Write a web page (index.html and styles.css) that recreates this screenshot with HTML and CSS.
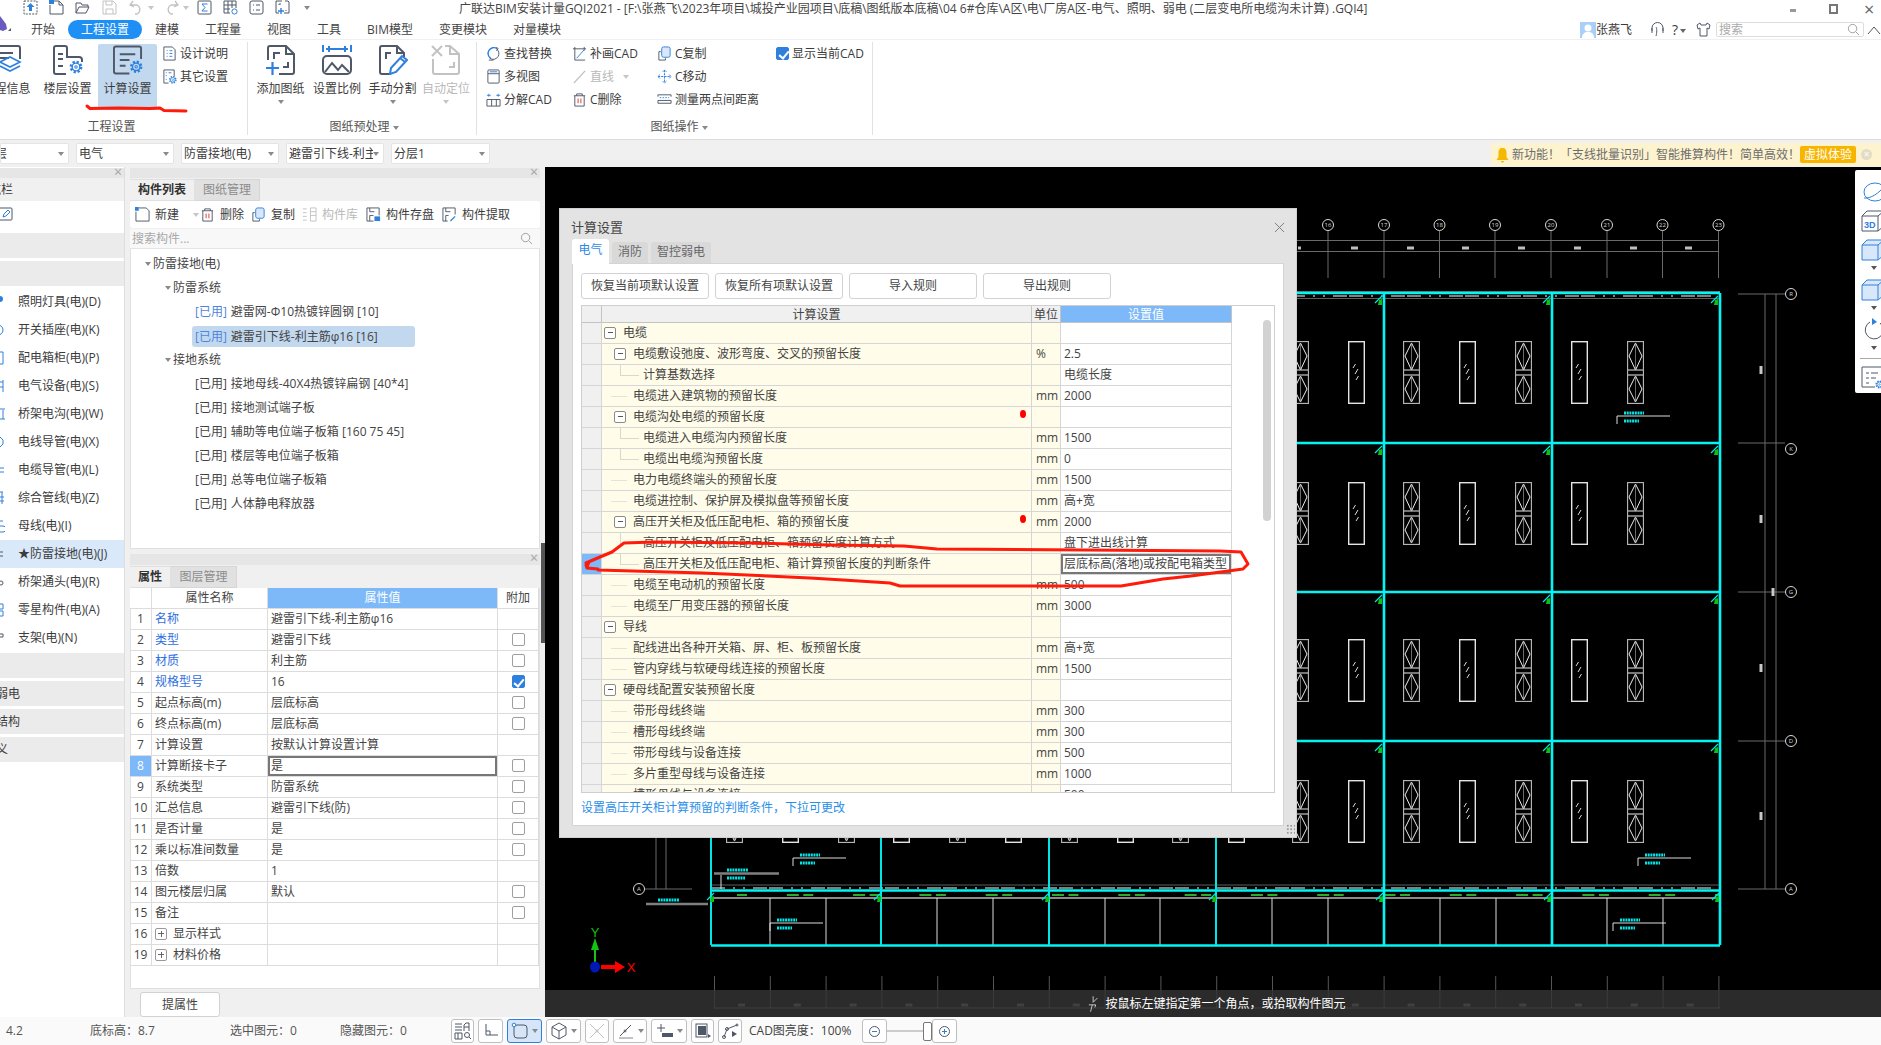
FILE: index.html
```html
<!DOCTYPE html>
<html lang="zh-CN">
<head>
<meta charset="utf-8">
<title>广联达BIM安装计量GQI2021</title>
<link rel="stylesheet" href="styles.css">
</head>
<body>
<svg class="defs" width="0" height="0" aria-hidden="true">
  <defs>
    <symbol id="gear" viewBox="0 0 16 16">
      <circle class="sb" cx="8" cy="8" r="6" stroke-width="2.6" stroke-dasharray="2.6 2.1"/>
      <circle class="sb" cx="8" cy="8" r="4.4" stroke-width="1.6"/>
      <circle class="sb" cx="8" cy="8" r="1.4" stroke-width="1.2"/>
    </symbol>
    <symbol id="i-info" viewBox="0 0 30 30">
      <path class="sd" stroke-width="2" d="M28 14V3a2 2 0 0 0-2-2H4a2 2 0 0 0-2 2v24M7 8h14M7 13h10"/>
      <path class="sb" stroke-width="1.6" d="M18 12l10 5-10 5-10-5zM8 21l10 5 10-5"/>
    </symbol>
    <symbol id="i-floor" viewBox="0 0 30 30">
      <path class="sd" stroke-width="2" d="M13 29H3a2 2 0 0 1-2-2V3a2 2 0 0 1 2-2h9a2 2 0 0 1 2 2v9h12a3 3 0 0 1 3 3v2M5 9h5M5 14h5M5 21h5"/>
      <use href="#gear" x="16" y="15" width="14" height="14"/>
    </symbol>
    <symbol id="i-calc" viewBox="0 0 31 30">
      <path class="sd" stroke-width="2" d="M17 29H3a2 2 0 0 1-2-2V3a2 2 0 0 1 2-2h24a2 2 0 0 1 2 2v11M7 9h16M7 15h10M7 21h6"/>
      <use href="#gear" x="17" y="15" width="14" height="14"/>
    </symbol>
    <symbol id="i-add" viewBox="0 0 30 30">
      <path class="sd" stroke-width="2" d="M13 29h13a2 2 0 0 0 2-2V9l-8-8H4a2 2 0 0 0-2 2v12M20 1v8h8M8 14V8h6M17 22h5v-5"/>
      <path class="sb" stroke-width="2.2" d="M0 23h13M6.500 17v13"/>
    </symbol>
    <symbol id="i-scale" viewBox="0 0 30 30">
      <path class="sb" stroke-width="2" d="M1 0v7M29 0v7M4 4h22M7 1v6M23 1v6"/>
      <rect class="sd" stroke-width="2" x="1" y="11" width="28" height="18" rx="4"/>
      <path class="sd" stroke-width="2" d="M3 27l7-9 6 7 4-5 7 7"/>
    </symbol>
    <symbol id="i-cut" viewBox="0 0 30 30">
      <path class="sd" stroke-width="2" d="M13 29H4a2 2 0 0 1-2-2V3a2 2 0 0 1 2-2h15l7 7v5M19 1v7h7M8 14V8h5"/>
      <path class="sb" stroke-width="2" d="M12 29l1-6 11-12 5 4-11 12zM22 13l5 4"/>
    </symbol>
    <symbol id="i-auto" viewBox="0 0 30 30">
      <path class="sg" stroke-width="2" d="M14 1h5l9 8v18a2 2 0 0 1-2 2H4a2 2 0 0 1-2-2V14M19 1v8h9M1 1l10 10M11 1L1 11M18 22h5v-5"/>
    </symbol>
    <symbol id="q-up" viewBox="0 0 15 15"><rect class="sd" x="1" y="1" width="13" height="13" stroke-dasharray="2 1.2"/><path class="fb" d="M7.500 3l4 4H9v4H6V7H3.500z"/></symbol>
    <symbol id="q-new" viewBox="0 0 15 15"><path class="sd" d="M5 1h5l4 4v9H1V5"/><path class="sd" d="M10 1v4h4"/><rect class="fb" x="0" y="0" width="5" height="4"/></symbol>
    <symbol id="q-open" viewBox="0 0 15 15"><path class="sd" d="M1 13V3h5l1 2h6v2M1 13l3-6h10l-3 6z"/></symbol>
    <symbol id="q-save" viewBox="0 0 15 15"><path class="sg" d="M1 1h10l3 3v10H1zM4 1v4h6V1M4 14V9h7v5"/></symbol>
    <symbol id="q-undo" viewBox="0 0 15 15"><path class="sg" stroke-width="1.3" d="M4 1L1 5l4 2M2 5h6a5 5 0 0 1 0 9H6"/></symbol>
    <symbol id="q-redo" viewBox="0 0 15 15"><path class="sg" stroke-width="1.3" d="M11 1l3 4-4 2M13 5H7a5 5 0 0 0 0 9h2"/></symbol>
    <symbol id="q-sum" viewBox="0 0 15 15"><rect class="sd" x="1" y="1" width="13" height="13" rx="1"/><path class="sb" d="M10.500 4H5l3 3.500L5 11h5.500"/></symbol>
    <symbol id="q-grid" viewBox="0 0 15 15"><path class="sd" d="M1 1h12v7M1 1v12h6M5 1v12M9 1v7M1 5h12M1 9h6"/><circle class="sb" cx="11.500" cy="11.500" r="2.600"/></symbol>
    <symbol id="q-list" viewBox="0 0 15 15"><rect class="sd" x="1" y="1" width="13" height="13" rx="2"/><path class="sd" d="M4 5h1M7 5h4M4 10h1M7 10h4"/></symbol>
    <symbol id="q-corner" viewBox="0 0 15 15"><path class="sd" d="M7 1H1v12h3M10 1h3l1 1v11H9M4 5V4h2M11 10v1"/><path class="sb" stroke-width="1.4" d="M3 11h6M6 8v6"/></symbol>
    <symbol id="s-doc" viewBox="0 0 16 16"><path class="sd" d="M2 1h9l3 3v11H2z"/><path class="sb" d="M5 5h1M8 5h3M5 8h1M8 8h3M5 11h1M8 11h3"/></symbol>
    <symbol id="s-oth" viewBox="0 0 16 16"><path class="sd" d="M7 15H2V1h11v7"/><path class="sb" d="M4 4h1M7 4h3M4 7h1M4 11h1"/><use href="#gear" x="7" y="7" width="9" height="9"/></symbol>
    <symbol id="s-find" viewBox="0 0 16 16"><path class="sb" stroke-width="1.5" d="M12 3a6 6 0 0 0-9 2 6 6 0 0 0 2 8"/><path class="sd" d="M4 13a6 6 0 0 0 9-2 6 6 0 0 0-2-8M3 15h5M11 1l2 2-2 2"/></symbol>
    <symbol id="s-view" viewBox="0 0 16 16"><rect class="sd" x="2" y="1" width="12" height="14" rx="1"/><path class="sd" d="M2 5h12"/><path class="sb" d="M4 3h8"/></symbol>
    <symbol id="s-split" viewBox="0 0 16 16"><path class="sd" d="M1 8v7h14V8zM6 8v7M11 8v7"/><path class="sb" d="M3 5V2M13 5V2M1 3.500h4M11 3.500h4"/></symbol>
    <symbol id="s-patch" viewBox="0 0 16 16"><path class="sd" d="M1 3h14M3 1v4M13 1v4M3 15h11M3 5v10"/><path class="sb" d="M5 13l8-9"/></symbol>
    <symbol id="s-line" viewBox="0 0 16 16"><path class="sg" stroke-width="1.4" d="M2 15L14 2"/></symbol>
    <symbol id="s-del" viewBox="0 0 16 16"><path class="sd" d="M2 4h12M5 4V2h6v2M3 4v11h10V4"/><path class="sr" d="M6.500 7v5M9.500 7v5"/></symbol>
    <symbol id="s-copy" viewBox="0 0 16 16"><path class="sd" d="M4 6H2v9h7v-2"/><rect class="sb fl" x="5" y="1" width="9" height="11" rx="2"/></symbol>
    <symbol id="s-move" viewBox="0 0 16 16"><path class="sb" d="M8 1v14M1 8h14M6 3l2-2 2 2M6 13l2 2 2-2M3 6L1 8l2 2M13 6l2 2-2 2" stroke-dasharray="2.4 1"/></symbol>
    <symbol id="s-meas" viewBox="0 0 16 16"><path class="sd" d="M1 3h14M1 3v2M15 3v2M1 12h14v-3H1z"/><path class="sb" d="M3 6h10" stroke-dasharray="1.500 1.500"/></symbol>
    <symbol id="t-new" viewBox="0 0 16 16"><path class="sd" d="M4 1h8l3 3v11H1V5"/><rect class="fb" x="0" y="0" width="4" height="4"/></symbol>
    <symbol id="t-lib" viewBox="0 0 16 16"><path class="sg" d="M1 2h4M1 6h4M1 10h4M1 14h4M9 1h6v14H9zM9 5h6M9 9h6"/></symbol>
    <symbol id="t-save" viewBox="0 0 16 16"><path class="sd" d="M8 15H1V1h13v8M4 15V9h4M4 1v4h5"/><rect class="fb" x="9" y="10" width="6" height="5"/></symbol>
    <symbol id="t-get" viewBox="0 0 16 16"><path class="sd" d="M6 15H1V1h13v7M4 15V9h3M4 1v4h5"/><path class="sb" stroke-width="1.4" d="M9 15l5-5"/></symbol>
    <symbol id="t-search" viewBox="0 0 14 14"><circle class="sn" cx="6" cy="6" r="4.500"/><path class="sn" d="M9.500 9.500L13 13"/></symbol>
    <symbol id="win-d" viewBox="0 0 17 63">
      <rect class="wg" x="0.500" y="0.500" width="16" height="62"/>
      <path class="wg" d="M1 29h15"/><path class="ww" d="M1 34h15M8.500 2L15 15 8.500 29 2 15zM8.500 35L15 48 8.500 61 2 48z"/>
      <path class="wg wthin" d="M8.500 2v27M8.500 35v26"/>
    </symbol>
    <symbol id="win-r" viewBox="0 0 17 63">
      <rect class="wb" x="0.700" y="0.700" width="15.600" height="61.600"/>
      <path class="wl" d="M5 27l2.500-4M7 33l3-5M8 39l2.500-4"/>
    </symbol>
    <g id="win-row">
      <use href="#win-d" x="726" width="17" height="63"/><use href="#win-r" x="782" width="17" height="63"/>
      <use href="#win-d" x="838" width="17" height="63"/><use href="#win-r" x="893" width="17" height="63"/>
      <use href="#win-d" x="949" width="17" height="63"/><use href="#win-r" x="1005" width="17" height="63"/>
      <use href="#win-d" x="1061" width="17" height="63"/><use href="#win-r" x="1117" width="17" height="63"/>
      <use href="#win-d" x="1172" width="17" height="63"/><use href="#win-r" x="1228" width="17" height="63"/>
      <use href="#win-d" x="1292" width="17" height="63"/><use href="#win-r" x="1348" width="17" height="63"/>
      <use href="#win-d" x="1403" width="17" height="63"/><use href="#win-r" x="1459" width="17" height="63"/>
      <use href="#win-d" x="1515" width="17" height="63"/><use href="#win-r" x="1571" width="17" height="63"/>
      <use href="#win-d" x="1627" width="17" height="63"/>
    </g>
    <g id="cnr"><path class="cy-t" d="M-8 9l7-7"/><path class="gr-f" d="M-4 6l3-1v6h-4z"/></g>
    <g id="tag"><path class="cy-b" d="M0 0h20M0 8h15"/><path class="wl" d="M-7 3h53M-7 3v8"/></g>
  </defs>
</svg>

<header class="titlebar">
  <div class="quick">
    <span class="qa w26"><svg class="q"><use href="#q-up"/></svg></span>
    <span class="qa w26"><svg class="q"><use href="#q-new"/></svg></span>
    <span class="qa w27"><svg class="q"><use href="#q-open"/></svg></span>
    <span class="qa w27"><svg class="q"><use href="#q-save"/></svg></span>
    <span class="qa w35"><svg class="q"><use href="#q-undo"/></svg><i class="caret c-light"></i></span>
    <span class="qa w33"><svg class="q"><use href="#q-redo"/></svg><i class="caret c-light"></i></span>
    <span class="qa w26"><svg class="q"><use href="#q-sum"/></svg></span>
    <span class="qa w26"><svg class="q"><use href="#q-grid"/></svg></span>
    <span class="qa w26"><svg class="q"><use href="#q-list"/></svg></span>
    <span class="qa w29"><svg class="q"><use href="#q-corner"/></svg></span>
    <i class="caret"></i>
  </div>
  <div class="title">广联达BIM安装计量GQI2021 - [F:\张燕飞\2023年项目\城投产业园项目\底稿\图纸版本底稿\04 6#仓库\A区\电\厂房A区-电气、照明、弱电 (二层变电所电缆沟未计算) .GQI4]</div>
  <div class="winctl">
    <span class="w-min"></span>
    <span class="w-res"></span>
    <span class="w-x">×</span>
  </div>
</header>

<nav class="tabs">
  <svg class="logo" viewBox="0 0 12 20"><path class="lg" d="M0 0l6 8 1 5-4 2-3-1z"/><path class="fd" d="M8 15l3-3v3z"/></svg>
  <span class="tab">开始</span>
  <span class="tab tab-on">工程设置</span>
  <span class="tab">建模</span>
  <span class="tab">工程量</span>
  <span class="tab">视图</span>
  <span class="tab">工具</span>
  <span class="tab">BIM模型</span>
  <span class="tab">变更模块</span>
  <span class="tab">对量模块</span>
  <div class="user">
    <svg class="avatar" viewBox="0 0 16 16"><rect width="16" height="16" fill="#a9d0f8"/><circle cx="8" cy="6" r="3.500" fill="#fff"/><path d="M2 16c0-5 3-6 6-6s6 1 6 6z" fill="#fff"/></svg>
    <span class="uname">张燕飞</span>
    <svg class="u-ic" viewBox="0 0 15 15"><path class="sd" d="M2 9V6a5.500 5.500 0 0 1 11 0v3M2 6v5M13 6v5M6 14c1-3 1-8 0-9"/></svg>
    <span class="help">?<i class="caret"></i></span>
    <svg class="u-ic" viewBox="0 0 15 15"><path class="sd" d="M4 1L1 3l1 4 2-1v8h7V6l2 1 1-4-3-2-1 2H5z"/></svg>
    <div class="search-top"><span>搜索</span><svg class="s14"><use href="#t-search"/></svg></div>
    <svg class="u-up" viewBox="0 0 14 10"><path class="sd" d="M1 9l6-7 6 7"/></svg>
  </div>
</nav>

<section class="ribbon">
  <div class="rg rg1">
    <div class="rg-body">
      <div class="big w61"><svg class="bi"><use href="#i-info"/></svg><span>工程信息</span></div>
      <div class="big w61"><svg class="bi"><use href="#i-floor"/></svg><span>楼层设置</span></div>
      <div class="big w59 big-on"><svg class="bi"><use href="#i-calc"/></svg><span>计算设置</span></div>
      <div class="rs-col">
        <div class="rs"><svg class="si"><use href="#s-doc"/></svg>设计说明</div>
        <div class="rs"><svg class="si"><use href="#s-oth"/></svg>其它设置</div>
      </div>
    </div>
    <div class="rg-label">工程设置</div>
  </div>
  <div class="rg rg2">
    <div class="rg-body">
      <div class="big w57"><svg class="bi"><use href="#i-add"/></svg><span>添加图纸</span><i class="caret"></i></div>
      <div class="big w56"><svg class="bi"><use href="#i-scale"/></svg><span>设置比例</span></div>
      <div class="big w55"><svg class="bi"><use href="#i-cut"/></svg><span>手动分割</span><i class="caret"></i></div>
      <div class="big w52 off"><svg class="bi"><use href="#i-auto"/></svg><span>自动定位</span><i class="caret c-light"></i></div>
    </div>
    <div class="rg-label">图纸预处理 <i class="caret"></i></div>
  </div>
  <div class="rg rg3">
    <div class="rg-body rg-grid">
      <div class="rs"><svg class="si"><use href="#s-find"/></svg>查找替换</div>
      <div class="rs"><svg class="si"><use href="#s-patch"/></svg>补画CAD</div>
      <div class="rs"><svg class="si"><use href="#s-copy"/></svg>C复制</div>
      <label class="rs rs-chk"><span class="cb cb-on"></span>显示当前CAD</label>
      <div class="rs"><svg class="si"><use href="#s-view"/></svg>多视图</div>
      <div class="rs off"><svg class="si"><use href="#s-line"/></svg>直线<i class="caret c-light ml"></i></div>
      <div class="rs"><svg class="si"><use href="#s-move"/></svg>C移动</div>
      <div></div>
      <div class="rs"><svg class="si"><use href="#s-split"/></svg>分解CAD</div>
      <div class="rs"><svg class="si"><use href="#s-del"/></svg>C删除</div>
      <div class="rs"><svg class="si"><use href="#s-meas"/></svg>测量两点间距离</div>
    </div>
    <div class="rg-label">图纸操作 <i class="caret"></i></div>
  </div>
</section>

<section class="selbar">
  <div class="sel sel0"><span class="sel-t0">首层</span><i class="caret"></i></div>
  <div class="sel sel98"><span>电气</span><i class="caret"></i></div>
  <div class="sel sel98"><span>防雷接地(电)</span><i class="caret"></i></div>
  <div class="sel sel98"><span>避雷引下线-利主</span><i class="caret"></i></div>
  <div class="sel sel99"><span>分层1</span><i class="caret"></i></div>
  <div class="banner">
    <svg class="bell" viewBox="0 0 12 16"><path d="M6 1c3 0 4 2 4 5v4l2 3H0l2-3V6c0-3 1-5 4-5zM4 14h4l-2 2z"/></svg>
    <span class="b-text">新功能！「支线批量识别」智能推算构件！简单高效！</span>
    <span class="b-btn">虚拟体验</span>
    <span class="b-x">×</span>
  </div>
</section>

<main class="main">
  <aside class="nav">
    <div class="ph"><span class="ph-x">×</span></div>
    <div class="nav-title"><span>导航栏</span></div>
    <div class="nav-edit"><svg class="nav-pen" viewBox="0 0 14 14"><rect class="sd" x="0" y="1" width="13" height="12" rx="1"/><path class="sb" d="M4 10l1-3 4-4 2 2-4 4z"/></svg></div>
    <div class="ng ng-first"></div>
    <div class="ng ng-gap"></div>
    <ul class="nl">
      <li><svg class="ni" viewBox="0 0 5 14"><circle class="fb" cx="0" cy="4" r="3"/></svg>照明灯具(电)(D)</li>
      <li><svg class="ni" viewBox="0 0 5 14"><circle class="sb" cx="-2" cy="7" r="5"/></svg>开关插座(电)(K)</li>
      <li><svg class="ni" viewBox="0 0 5 14"><path class="sb" d="M0 1h3v12H0"/></svg>配电箱柜(电)(P)</li>
      <li><svg class="ni" viewBox="0 0 5 14"><path class="sb" d="M0 3h3M3 1v12M0 8h3"/></svg>电气设备(电)(S)</li>
      <li><svg class="ni" viewBox="0 0 5 14"><path class="sb" d="M0 2h5M3 3v9M0 12h5"/></svg>桥架电沟(电)(W)</li>
      <li><svg class="ni" viewBox="0 0 5 14"><path class="sb" d="M0 2l3 3v4l-3 3"/></svg>电线导管(电)(X)</li>
      <li><svg class="ni" viewBox="0 0 5 14"><path class="sb" d="M0 5h4M0 9h4"/></svg>电缆导管(电)(L)</li>
      <li><svg class="ni" viewBox="0 0 5 14"><path class="sb" d="M0 1h3M2 1v12M0 6h4M0 10h4"/></svg>综合管线(电)(Z)</li>
      <li><svg class="ni" viewBox="0 0 5 14"><path class="sb" d="M0 2h3M0 7h3a3 3 0 0 1 0 6H0"/></svg>母线(电)(I)</li>
      <li class="nl-on"><svg class="ni" viewBox="0 0 5 14"><path class="sd" d="M0 5h3M0 9h3"/></svg>★防雷接地(电)(J)</li>
      <li><svg class="ni" viewBox="0 0 5 14"><circle class="sd" cx="1" cy="8" r="2"/></svg>桥架通头(电)(R)</li>
      <li><svg class="ni" viewBox="0 0 5 14"><path class="sb" d="M0 1h3v5H0M0 8h3v5H0"/></svg>零星构件(电)(A)</li>
      <li><svg class="ni" viewBox="0 0 5 14"><path class="sd" d="M0 3h3v3H0"/></svg>支架(电)(N)</li>
    </ul>
    <div class="ng"></div>
    <div class="ng ng-m3"><span class="ng-t">弱电</span></div>
    <div class="ng ng-m3"><span class="ng-t">结构</span></div>
    <div class="ng ng-m3"><span class="ng-t ng-t3">自定义</span></div>
  </aside>

  <div class="mid">
    <div class="ph ph-m"><span class="ph-x">×</span></div>
    <div class="ptabs"><span class="pt pt65 pt-on">构件列表</span><span class="pt pt65">图纸管理</span></div>
    <div class="tools">
      <span class="tl tl-new"><svg class="si"><use href="#t-new"/></svg>新建<i class="caret c-light ml9"></i></span>
      <span class="tl tl-del"><svg class="si"><use href="#s-del"/></svg>删除</span>
      <span class="tl tl-cp"><svg class="si"><use href="#s-copy"/></svg>复制</span>
      <span class="tl tl-lib off"><svg class="si"><use href="#t-lib"/></svg>构件库</span>
      <span class="tl tl-sv"><svg class="si"><use href="#t-save"/></svg>构件存盘</span>
      <span class="tl"><svg class="si"><use href="#t-get"/></svg>构件提取</span>
    </div>
    <div class="csearch"><span>搜索构件...</span><svg class="s14"><use href="#t-search"/></svg></div>
    <div class="tree">
      <div class="tr t1"><i class="caret"></i>防雷接地(电)</div>
      <div class="tr t2"><i class="caret"></i>防雷系统</div>
      <div class="tr t3"><span class="tag tag-b">[已用]</span>避雷网-Φ10热镀锌圆钢 [10]</div>
      <div class="tr t3"><span class="tr-sel"><span class="tag tag-b">[已用]</span>避雷引下线-利主筋φ16 [16]</span></div>
      <div class="tr t2"><i class="caret"></i>接地系统</div>
      <div class="tr t3"><span class="tag">[已用]</span>接地母线-40X4热镀锌扁钢 [40*4]</div>
      <div class="tr t3"><span class="tag">[已用]</span>接地测试端子板</div>
      <div class="tr t3"><span class="tag">[已用]</span>辅助等电位端子板箱 [160 75 45]</div>
      <div class="tr t3"><span class="tag">[已用]</span>楼层等电位端子板箱</div>
      <div class="tr t3"><span class="tag">[已用]</span>总等电位端子板箱</div>
      <div class="tr t3"><span class="tag">[已用]</span>人体静电释放器</div>
    </div>
    <div class="ph ph-m ph-2"><span class="ph-x">×</span></div>
    <div class="ptabs"><span class="pt pt41 pt-on">属性</span><span class="pt pt66">图层管理</span></div>
    <div class="props">
      <table class="pg">
        <colgroup><col class="c22"><col class="c116"><col class="c230"><col class="c41"></colgroup>
        <thead><tr><th></th><th>属性名称</th><th class="th-b">属性值</th><th>附加</th></tr></thead>
        <tbody>
          <tr><td class="n">1</td><td class="lk">名称</td><td>避雷引下线-利主筋φ16</td><td></td></tr>
          <tr><td class="n">2</td><td class="lk">类型</td><td>避雷引下线</td><td class="m"><span class="cb"></span></td></tr>
          <tr><td class="n">3</td><td class="lk">材质</td><td>利主筋</td><td class="m"><span class="cb"></span></td></tr>
          <tr><td class="n">4</td><td class="lk">规格型号</td><td>16</td><td class="m"><span class="cb cb-on"></span></td></tr>
          <tr><td class="n">5</td><td>起点标高(m)</td><td>层底标高</td><td class="m"><span class="cb"></span></td></tr>
          <tr><td class="n">6</td><td>终点标高(m)</td><td>层底标高</td><td class="m"><span class="cb"></span></td></tr>
          <tr><td class="n">7</td><td>计算设置</td><td>按默认计算设置计算</td><td></td></tr>
          <tr><td class="n n-on">8</td><td>计算断接卡子</td><td class="cell-on">是</td><td class="m"><span class="cb"></span></td></tr>
          <tr><td class="n">9</td><td>系统类型</td><td>防雷系统</td><td class="m"><span class="cb"></span></td></tr>
          <tr><td class="n">10</td><td>汇总信息</td><td>避雷引下线(防)</td><td class="m"><span class="cb"></span></td></tr>
          <tr><td class="n">11</td><td>是否计量</td><td>是</td><td class="m"><span class="cb"></span></td></tr>
          <tr><td class="n">12</td><td>乘以标准间数量</td><td>是</td><td class="m"><span class="cb"></span></td></tr>
          <tr><td class="n">13</td><td>倍数</td><td>1</td><td></td></tr>
          <tr><td class="n">14</td><td>图元楼层归属</td><td>默认</td><td class="m"><span class="cb"></span></td></tr>
          <tr><td class="n">15</td><td>备注</td><td></td><td class="m"><span class="cb"></span></td></tr>
          <tr><td class="n">16</td><td><span class="pl"></span>显示样式</td><td></td><td></td></tr>
          <tr><td class="n">19</td><td><span class="pl"></span>材料价格</td><td></td><td></td></tr>
        </tbody>
      </table>
    </div>
    <div class="pfoot"><button class="btn btn-p">提属性</button></div>
    <span class="split"></span>
  </div>

  <div class="canvas">
    <svg class="cad" viewBox="545 167 1336 850" width="1336" height="850">
      <path class="d1" d="M1297 240.500H1718.500M1297 251.500H1718.500M1328 231V278M1384 231V278M1439.500 231V278M1495 231V278M1551 231V278M1607 231V278M1662.500 231V278M1718.500 231V278"/>
      <path class="blob" d="M1298 248h3M1351 248h7M1407 248h7M1462 248h7M1518 248h7M1574 248h7M1630 248h7M1685 248h7"/>
      <g class="axc">
        <circle cx="1328" cy="225" r="5.500"/><circle cx="1384" cy="225" r="5.500"/><circle cx="1439.500" cy="225" r="5.500"/><circle cx="1495" cy="225" r="5.500"/><circle cx="1551" cy="225" r="5.500"/><circle cx="1607" cy="225" r="5.500"/><circle cx="1662.500" cy="225" r="5.500"/><circle cx="1718.500" cy="225" r="5.500"/>
        <circle cx="1791" cy="294" r="5.500"/><circle cx="1791" cy="449" r="5.500"/><circle cx="1791" cy="592" r="5.500"/><circle cx="1791" cy="741" r="5.500"/><circle cx="1791" cy="889" r="5.500"/><circle cx="639" cy="889" r="5.500"/>
      </g>
      <g class="axt">
        <text x="1328" y="227">16</text><text x="1384" y="227">17</text><text x="1439.500" y="227">18</text><text x="1495" y="227">19</text><text x="1551" y="227">20</text><text x="1607" y="227">21</text><text x="1662.500" y="227">22</text><text x="1718.500" y="227">23</text>
        <text x="1791" y="296">R</text><text x="1791" y="451">K</text><text x="1791" y="594">G</text><text x="1791" y="743">D</text><text x="1791" y="891">A</text><text x="639" y="891">A</text>
      </g>
      <path class="d1" d="M1738 294H1785M1738 443H1785M1738 592H1785M1738 741H1785M1738 889H1785M1765 294V889M1776 294V889M645 889H692M656 830V889M666 830V889"/>
      <path class="blob-v" d="M1761 366v8M1761 515v8M1761 664v8M1761 812v8M1773 588v8"/>
      <use href="#win-row" y="341"/><use href="#win-row" y="482"/><use href="#win-row" y="639"/><use href="#win-row" y="780"/>
      <path class="d2" d="M711 291.500H1720M711 298.500H1720M711 885H1720"/>
      <path class="band" d="M711 296H1720"/>
      <path class="band" d="M711 888H1720"/>
      <path class="white" d="M711 898H1720"/>
      <path class="greend" d="M737 895H1720"/>
      <path class="wl" d="M770 898V945M826 898V945M937 898V945M993 898V945M1105 898V945M1160 898V945M1272 898V945M1328 898V945M1440 898V945M1496 898V945M1607 898V945M1663 898V945"/>
      <path class="cy" d="M711 293H1720M711 443H1720M711 592H1720M711 741H1720M711 890.500H1720M711 945.500H1720M1384 293V945M1552 293V945M1720 293V945"/>
      <path class="cy-thin" d="M711 293V945M881 293V945M1049 293V945M1216 293V945"/>
      <g>
        <use href="#cnr" x="1383" y="294"/><use href="#cnr" x="1551" y="294"/><use href="#cnr" x="1719" y="294"/>
        <use href="#cnr" x="1383" y="444"/><use href="#cnr" x="1551" y="444"/><use href="#cnr" x="1719" y="444"/>
        <use href="#cnr" x="1383" y="593"/><use href="#cnr" x="1551" y="593"/><use href="#cnr" x="1719" y="593"/>
        <use href="#cnr" x="1383" y="742"/><use href="#cnr" x="1551" y="742"/><use href="#cnr" x="1719" y="742"/>
        <use href="#cnr" x="715" y="891"/><use href="#cnr" x="882" y="891"/><use href="#cnr" x="1050" y="891"/><use href="#cnr" x="1217" y="891"/><use href="#cnr" x="1384" y="891"/><use href="#cnr" x="1552" y="891"/><use href="#cnr" x="1720" y="891"/>
      </g>
      <use href="#tag" x="1624" y="413"/><use href="#tag" x="1645" y="855"/><use href="#tag" x="800" y="855"/>
      <use href="#tag" x="777" y="920"/><use href="#tag" x="1620" y="920"/>
      <path class="thick" d="M714 873.500H779M646 904H708"/><path class="wl" d="M721 875V889"/>
      <path class="cy-b" d="M727 870h21M727 878h18M658 900h21"/>
      <path class="comb" d="M714 992H1720"/>
      <path class="d3" d="M714 1008H1720"/>
      <path class="dimt" d="M738 1005H1720"/>
      <path class="gz-g" d="M595 967V945"/><path class="gz-gf" d="M595 938l4 12h-8z"/>
      <path class="gz-r" d="M601 967H616"/><path class="gz-rf" d="M625 967l-10 6v-12z"/>
      <ellipse class="gz-b" cx="595" cy="967" rx="5" ry="5.500"/>
      <text class="gz-ty" x="595" y="937">Y</text><text class="gz-tx" x="631" y="972">X</text>
    </svg>

    <div class="rtool">
      <svg class="rt" viewBox="0 0 26 24"><ellipse class="sb" cx="15" cy="12" rx="11" ry="9"/><path class="sb" d="M4 18c6 1 16-5 20-12"/></svg>
      <svg class="rt" viewBox="0 0 26 24"><path class="sd" d="M2 7h16v15H2zM2 7l5-5h17v15l-6 5M18 7l6-5"/><text class="rt-3d" x="4" y="19">3D</text></svg>
      <svg class="rt" viewBox="0 0 26 24"><path class="sb fl" d="M2 7h16v15H2zM2 7l5-5h17v15l-6 5M18 7l6-5"/></svg>
      <i class="caret rc"></i>
      <svg class="rt" viewBox="0 0 26 24"><path class="sb fl" d="M2 7h16v15H2zM2 7l5-5h17v15l-6 5M18 7l6-5"/></svg>
      <i class="caret rc"></i>
      <svg class="rt" viewBox="0 0 26 24"><path class="sd" d="M10 4a9 9 0 1 0 10 1"/><path class="fb" d="M12 0l5 4-5 3z"/></svg>
      <i class="caret rc"></i>
      <span class="rt-line"></span>
      <svg class="rt" viewBox="0 0 26 24"><path class="sd" d="M15 22H2V2h20v13M6 8h3M11 8h7M6 13h3M11 13h5M6 18h3"/><use href="#gear" x="15" y="15" width="9" height="9"/></svg>
    </div>

    <div class="hint">
      <svg class="hint-ic" viewBox="0 0 14 20"><path class="wl" d="M6 1v7l5-5M1 11h8M5 11l-2 8M9 11l-1 3"/></svg>
      <span>按鼠标左键指定第一个角点，或拾取构件图元</span>
    </div>

    <div class="dlg">
      <div class="dlg-h"><span>计算设置</span><svg class="dlg-x" viewBox="0 0 12 12"><path d="M1 1l10 10M11 1L1 11"/></svg></div>
      <div class="dlg-tabs"><span class="dt dt-on">电气</span><span class="dt">消防</span><span class="dt dt-w">智控弱电</span></div>
      <div class="dlg-b">
        <div class="dlg-btns">
          <button class="btn btn-d">恢复当前项默认设置</button>
          <button class="btn btn-d">恢复所有项默认设置</button>
          <button class="btn btn-d">导入规则</button>
          <button class="btn btn-d">导出规则</button>
        </div>
        <div class="cwrap">
          <table class="ct">
            <colgroup><col class="c20"><col class="c430"><col class="c29"><col class="c171"></colgroup>
            <thead><tr><th></th><th>计算设置</th><th>单位</th><th class="th-b">设置值</th></tr></thead>
            <tbody>
              <tr><td class="ind"></td><td class="nm l0"><i class="ex"></i>电缆</td><td class="u"></td><td class="v"></td></tr>
              <tr><td class="ind"></td><td class="nm l1 g"><i class="ex"></i>电缆敷设弛度、波形弯度、交叉的预留长度</td><td class="u">%</td><td class="v">2.5</td></tr>
              <tr><td class="ind"></td><td class="nm l2">计算基数选择</td><td class="u"></td><td class="v">电缆长度</td></tr>
              <tr><td class="ind"></td><td class="nm l1 h">电缆进入建筑物的预留长度</td><td class="u">mm</td><td class="v">2000</td></tr>
              <tr><td class="ind"></td><td class="nm l1 g"><i class="ex"></i>电缆沟处电缆的预留长度<b class="dot"></b></td><td class="u"></td><td class="v"></td></tr>
              <tr><td class="ind"></td><td class="nm l2">电缆进入电缆沟内预留长度</td><td class="u">mm</td><td class="v">1500</td></tr>
              <tr><td class="ind"></td><td class="nm l2">电缆出电缆沟预留长度</td><td class="u">mm</td><td class="v">0</td></tr>
              <tr><td class="ind"></td><td class="nm l1 h">电力电缆终端头的预留长度</td><td class="u">mm</td><td class="v">1500</td></tr>
              <tr><td class="ind"></td><td class="nm l1 h">电缆进控制、保护屏及模拟盘等预留长度</td><td class="u">mm</td><td class="v">高+宽</td></tr>
              <tr><td class="ind"></td><td class="nm l1 g"><i class="ex"></i>高压开关柜及低压配电柜、箱的预留长度<b class="dot"></b></td><td class="u">mm</td><td class="v">2000</td></tr>
              <tr><td class="ind"></td><td class="nm l2">高压开关柜及低压配电柜、箱预留长度计算方式</td><td class="u"></td><td class="v">盘下进出线计算</td></tr>
              <tr><td class="ind ind-on"></td><td class="nm l2">高压开关柜及低压配电柜、箱计算预留长度的判断条件</td><td class="u"></td><td class="v v-on">层底标高(落地)或按配电箱类型</td></tr>
              <tr><td class="ind"></td><td class="nm l1 h">电缆至电动机的预留长度</td><td class="u">mm</td><td class="v">500</td></tr>
              <tr><td class="ind"></td><td class="nm l1 h">电缆至厂用变压器的预留长度</td><td class="u">mm</td><td class="v">3000</td></tr>
              <tr><td class="ind"></td><td class="nm l0"><i class="ex"></i>导线</td><td class="u"></td><td class="v"></td></tr>
              <tr><td class="ind"></td><td class="nm l1 h">配线进出各种开关箱、屏、柜、板预留长度</td><td class="u">mm</td><td class="v">高+宽</td></tr>
              <tr><td class="ind"></td><td class="nm l1 h">管内穿线与软硬母线连接的预留长度</td><td class="u">mm</td><td class="v">1500</td></tr>
              <tr><td class="ind"></td><td class="nm l0"><i class="ex"></i>硬母线配置安装预留长度</td><td class="u"></td><td class="v"></td></tr>
              <tr><td class="ind"></td><td class="nm l1 h">带形母线终端</td><td class="u">mm</td><td class="v">300</td></tr>
              <tr><td class="ind"></td><td class="nm l1 h">槽形母线终端</td><td class="u">mm</td><td class="v">300</td></tr>
              <tr><td class="ind"></td><td class="nm l1 h">带形母线与设备连接</td><td class="u">mm</td><td class="v">500</td></tr>
              <tr><td class="ind"></td><td class="nm l1 h">多片重型母线与设备连接</td><td class="u">mm</td><td class="v">1000</td></tr>
              <tr><td class="ind"></td><td class="nm l1 h">槽形母线与设备连接</td><td class="u">mm</td><td class="v">500</td></tr>
            </tbody>
          </table>
          <span class="vbar"></span>
        </div>
        <div class="dlg-hint">设置高压开关柜计算预留的判断条件，下拉可更改</div>
      </div>
      <span class="grip"></span>
    </div>
  </div>
</main>

<footer class="status">
  <span class="st st84">4.2</span>
  <span class="st st140">底标高：8.7</span>
  <span class="st st110">选中图元：0</span>
  <span class="st st111">隐藏图元：0</span>
  <div class="sb-btns">
    <span class="sbtn sw23"><svg class="sic" viewBox="0 0 18 18"><path class="sd" d="M1 2h7M1 5h7M1 8h7M10 9V3l2-2h3v8M10 5h5M1 11h7v6H1zM4 11v6"/><circle class="sd" cx="13" cy="13" r="2.500"/><path class="sd" d="M15 15l2 2"/></svg></span>
    <span class="sbtn sw25"><svg class="sic" viewBox="0 0 18 18"><path class="sd" d="M4 2v11h12M4 9h4v4"/></svg></span>
    <span class="sbtn sw35 sbtn-on"><svg class="sic" viewBox="0 0 18 18"><rect class="sd" x="3" y="3" width="13" height="13" rx="3"/><circle class="sb fw" cx="3" cy="3" r="1.800"/></svg><i class="caret"></i></span>
    <span class="sbtn sw35"><svg class="sic" viewBox="0 0 18 18"><path class="sd" d="M9 1l7 4v8l-7 4-7-4V5zM2 5l7 4 7-4M9 9v8"/></svg><i class="caret"></i></span>
    <span class="sbtn sw24"><svg class="sic" viewBox="0 0 18 18"><path class="sg" d="M2 2l14 14M16 2L2 16"/><circle class="sg" cx="9" cy="9" r="1"/></svg></span>
    <span class="sbtn sw34"><svg class="sic" viewBox="0 0 18 18"><path class="sd" d="M3 14L14 3"/><path class="sg" stroke-width="2" d="M2 16h14"/><circle class="sd" cx="8" cy="9" r="1"/></svg><i class="caret"></i></span>
    <span class="sbtn sw36"><svg class="sic" viewBox="0 0 18 18"><path class="sd" d="M1 6h8M5 2v8"/><rect class="fd" x="6" y="11" width="11" height="4"/></svg><i class="caret"></i></span>
    <span class="sbtn sw23"><svg class="sic" viewBox="0 0 18 18"><rect class="sd" x="2" y="2" width="11" height="13"/><rect class="fd" x="4" y="4" width="8" height="9"/><path class="fd" d="M14 12l3 2-3 2z"/></svg></span>
    <span class="sbtn sw24"><svg class="sic" viewBox="0 0 18 18"><path class="sd" d="M3 15l3-8 10-4"/><circle class="sd" cx="3" cy="15" r="1.500"/><circle class="sd" cx="6" cy="7" r="1.500"/><circle class="sd" cx="16" cy="3" r="1"/><path class="fd" d="M11 9l5 3-5 3z"/></svg></span>
  </div>
  <span class="cad-l">CAD图亮度：100%</span>
  <span class="sbtn sq"><i class="minus"></i></span>
  <span class="slider"><i class="knob"></i></span>
  <span class="sbtn sq sq-p"><i class="minus"></i></span>
</footer>

<svg class="ink" viewBox="0 0 1881 1045" width="1881" height="1045" aria-hidden="true">
  <path d="M87 106l3 2.500 28-.5 32 .5 10-.5 4 2.500 22 .5"/>
  <path d="M598 569l-11-1-1-3 3-3-2 5M586 563l14-6 12-5 12-9 30-1 95 1 80 2 75 1 33 3 283 2 21 1 7 12-5 5-52 7-28 3-42 7H900l-10-3-47-3-33-2-108-5-104-3"/>
</svg>
</body>
</html>
```

FILE: styles.css
```css
* { box-sizing: border-box; }
html, body { margin: 0; padding: 0; }
body {
  position: relative;
  width: 1881px;
  height: 1045px;
  overflow: hidden;
  display: flex;
  flex-direction: column;
  background: #f0f0f0;
  color: #3c3c3c;
  font: 12px/16px "Open Sans", "Noto Sans CJK SC", sans-serif;
}
ul { margin: 0; padding: 0; list-style: none; }
i { font-style: normal; }
.defs { position: absolute; }

/* svg paint classes */
.sd, .sb, .sg, .sr, .sn, .wg, .ww, .wl, .wb { fill: none; }
.sd { stroke: #4f5868; }
.sb { stroke: #2f80dd; }
.sg { stroke: #c2c2c2; }
.sr { stroke: #e0322c; }
.sn { stroke: #9a9a9a; }
.fb { fill: #2f80dd; }
.fd { fill: #4f5868; }
.fl { fill: #d8e8fa; }
.fw { fill: #fff; }
.wg { stroke: #b4b4b4; stroke-width: 1.300; }
.wthin { stroke-width: .6; }
.ww { stroke: #eeeeee; stroke-width: 1; }
.wl { stroke: #dcdcdc; stroke-width: 1; }
.wb { stroke: #e4e4e4; stroke-width: 1.400; }
.lg { fill: #6a5bc0; }

.caret {
  display: inline-block;
  width: 0; height: 0;
  border: 3px solid transparent;
  border-top: 4px solid #8a8a8a;
  border-bottom: 0;
  vertical-align: middle;
}
.c-light { border-top-color: #c6c6c6; }
.off { color: #b9b9b9; }
.ml { margin-left: 6px; }
.ml9 { margin-left: 9px; }

/* title bar */
.titlebar { flex: none; height: 20px; display: flex; align-items: center; background: #fff; }
.quick { flex: none; width: 459px; padding-left: 23px; display: flex; align-items: flex-start; height: 20px; overflow: hidden; }
.qa { display: flex; align-items: center; gap: 4px; flex: none; }
.w26 { width: 26px; } .w27 { width: 27px; } .w29 { width: 29px; } .w33 { width: 33px; } .w35 { width: 35px; }
.q { width: 15px; height: 15px; flex: none; }
.quick > .caret { margin-top: 6px; }
.title { flex: none; width: 1000px; font-size: 12px; white-space: nowrap; color: #444; line-height: 18px; height: 20px; }
.winctl { margin-left: auto; display: flex; align-items: center; height: 18px; align-self: flex-start; width: 92px; justify-content: flex-end; color: #666; }
.w-min { width: 6px; height: 3px; background: #999; margin: 3px 33px 0 0; }
.w-res { width: 9px; height: 10px; border: 2px solid #777; margin-right: 26px; }
.w-x { font-size: 18px; line-height: 18px; width: 17px; text-align: left; }

/* tabs */
.tabs { flex: none; height: 20px; display: flex; align-items: stretch; background: #fff; padding-left: 18px; position: relative; border-bottom: 1px solid #f0f0f0; }
.logo { position: absolute; left: 0; top: -4px; width: 12px; height: 20px; }
.tab { width: auto; padding: 0 13px; line-height: 19px; height: 19px; color: #444; white-space: nowrap; }
.tab-on { background: #1e8ff5; color: #fff; border-radius: 10px; }
.user { margin-left: auto; display: flex; align-items: center; height: 19px; }
.avatar { width: 16px; height: 16px; }
.uname { width: 54px; }
.u-ic { width: 15px; height: 15px; }
.help { width: 31px; padding-left: 7px; font-size: 14px; }
.help .caret { margin-left: 2px; border-top-color: #666; }
.search-top { width: 148px; height: 15px; margin: 0 3px 0 5px; border: 1px solid #ddd; border-radius: 2px; display: flex; align-items: center; justify-content: space-between; padding: 0 3px 0 2px; color: #aaa; line-height: 13px; }
.s14 { width: 13px; height: 13px; flex: none; }
.u-up { width: 14px; height: 10px; }

/* ribbon */
.ribbon { flex: none; height: 100px; padding-top: 2px; display: flex; background: #fff; border-bottom: 1px solid #dcdcdc; }
.rg { flex: none; height: 93px; display: flex; flex-direction: column; border-right: 1px solid #e2e2e2; }
.rg1 { width: 272px; margin-left: -24px; }
.rg2 { width: 229px; padding-left: 4px; }
.rg3 { width: 396px; padding-left: 9px; }
.rg-body { height: 76px; display: flex; }
.rg-grid { display: grid; grid-template-columns: 86px 85px 119px 1fr; grid-auto-rows: 23px; }
.rg-label { height: 17px; line-height: 17px; text-align: center; color: #555; }
.big { flex: none; height: 66px; margin-top: 2px; display: flex; flex-direction: column; align-items: center; white-space: nowrap; }
.big span { margin-top: 6px; }
.big .caret { margin-top: 3px; }
.big-on { background: #c1d8ef; border-radius: 2px; }
.bi { width: 30px; height: 30px; margin-top: 1px; flex: none; }
.w52 { width: 52px; } .w55 { width: 55px; } .w56 { width: 56px; } .w57 { width: 57px; } .w59 { width: 59px; } .w61 { width: 61px; }
.off .sd, .off .sb { stroke: #c2c2c2; }
.rs-col { margin-left: 5px; }
.rs { height: 23px; display: flex; align-items: center; gap: 3px; white-space: nowrap; }
.si { width: 15px; height: 15px; flex: none; }
.rs-chk { gap: 3px; }
.cb { display: inline-block; width: 13px; height: 13px; border: 1px solid #9f9f9f; border-radius: 2px; background: #fff; position: relative; vertical-align: middle; }
.cb-on { background: #2f80dd; border-color: #2f80dd; }
.cb-on::after { content: ""; position: absolute; left: 3.500px; top: 0.500px; width: 4px; height: 8px; border: solid #fff; border-width: 0 2px 2px 0; transform: rotate(40deg); }

/* selector bar */
.selbar { flex: none; height: 27px; display: flex; align-items: flex-start; gap: 7px; padding-top: 3px; background: #f0f0f0; border-top: 0; }
.sel { flex: none; height: 21px; background: #fff; border: 1px solid #e4e4e4; border-radius: 2px; display: flex; align-items: center; justify-content: space-between; padding: 0 4px 0 2px; overflow: hidden; white-space: nowrap; }
.sel span { overflow: hidden; flex: 1; min-width: 0; }
.sel0 { width: 69px; }
.sel-t0 { margin-left: -20px; overflow: visible !important; }
.sel98 { width: 98px; }
.sel99 { width: 99px; }
.banner { margin: 0 0 0 auto; flex: none; width: 390px; height: 23px; background: #fdf3cf; display: flex; align-items: center; padding-left: 5px; color: #6d6d6d; white-space: nowrap; }
.bell { width: 13px; height: 16px; fill: #f5b800; flex: none; margin-right: 3px; }
.b-text { width: 288px; flex: none; }
.b-btn { width: 56px; height: 17px; line-height: 17px; background: #f7b500; color: #fff; text-align: center; border-radius: 2px; flex: none; }
.b-x { width: 11px; height: 11px; margin-left: 5px; border-radius: 50%; background: #e3dcc4; color: #fff; line-height: 10px; text-align: center; font-size: 10px; flex: none; }

/* main */
.main { flex: none; height: 850px; display: flex; background: #f0f0f0; }
.ph { height: 10px; margin-top: 1px; background: #e6e6e6; position: relative; }
.ph-x { position: absolute; right: 2px; top: -3px; font-size: 14px; line-height: 14px; color: #a5a5a5; }

.nav { flex: none; width: 125px; display: flex; flex-direction: column; background: #fff; overflow: hidden; border-right: 1px solid #dedede; }
.nav-title { height: 23px; background: #f0f0f0; line-height: 23px; white-space: nowrap; }
.nav-title span { margin-left: -23px; }
.nav-edit { height: 27px; background: #fff; padding-top: 6px; }
.nav-pen { width: 14px; height: 14px; display: block; margin-left: -1px; }
.ng { height: 25px; background: #ebebeb; flex: none; line-height: 25px; white-space: nowrap; }
.ng-first { margin-top: 5px; }
.ng-gap { margin-top: 3px; }
.ng-m3 { margin-top: 3px; }
.ng-t { display: block; margin-left: -4px; }
.ng-t3 { margin-left: -28px; }
.nl { flex: none; height: 367px; background: #fff; padding-top: 2px; }
.nl li { height: 28px; line-height: 28px; padding-left: 18px; position: relative; white-space: nowrap; }
.nl-on { background: #d9e9fa; }
.ni { position: absolute; left: 0; top: 7px; width: 5px; height: 14px; }

.mid { flex: none; width: 420px; padding: 0 5px; position: relative; display: flex; flex-direction: column; background: #f0f0f0; }
.ph-m { width: 410px; }
.ph-2 { margin-top: 5px; height: 11px; }
.ptabs { height: 23px; display: flex; width: 410px; background: #f0f0f0; padding-top: 1px; }
.pt { height: 22px; line-height: 20px; text-align: center; background: #e1e1e1; color: #8c8c8c; border: 1px solid #d6d6d6; border-left: 0; }
.pt-on { background: #f0f0f0; color: #333; font-weight: 700; border-color: #e0e0e0; }
.pt41 { width: 41px; } .pt65 { width: 65px; } .pt66 { width: 66px; }
.tools { width: 410px; height: 27px; background: #fff; display: flex; align-items: center; padding-left: 5px; border-radius: 2px; white-space: nowrap; }
.tl { display: flex; align-items: center; gap: 5px; flex: none; }
.tl-new { width: 65px; }
.tl-del { width: 51px; }
.tl-cp { width: 51px; }
.tl-lib { width: 64px; }
.tl-sv { width: 76px; }
.csearch { width: 410px; height: 20px; margin-top: 1px; background: #f8f8f8; border-bottom: 1px solid #e4e4e4; display: flex; align-items: center; justify-content: space-between; padding: 0 7px 0 2px; color: #a8a8a8; }
.tree { width: 410px; height: 300px; background: #fff; border: 1px solid #e0e0e0; border-top: 0; padding-top: 3px; flex: none; }
.tr { height: 24px; line-height: 24px; white-space: nowrap; display: flex; align-items: center; color: #444; }
.tr .caret { margin-right: 2px; }
.t1 { padding-left: 14px; }
.t2 { padding-left: 34px; }
.t3 { padding-left: 64px; }
.tag { margin-right: 4px; }
.tag-b { color: #4d86dc; }
.tr-sel { background: #c1d8ef; border-radius: 3px; width: 223px; height: 21px; line-height: 21px; margin-left: -3px; padding-left: 3px; }
.props { width: 410px; height: 401px; background: #fff; border: 1px solid #e0e0e0; border-top: 0; flex: none; }
table { border-collapse: separate; border-spacing: 0; table-layout: fixed; }
.pg { width: 409px; margin-left: -1px; }
.c22 { width: 22px; } .c116 { width: 116px; } .c230 { width: 230px; } .c41 { width: 41px; }
.c20 { width: 20px; } .c430 { width: 430px; } .c29 { width: 29px; } .c171 { width: 171px; }
.pg th, .pg td { height: 21px; padding: 0 3px; border: solid #dcdcdc; border-width: 0 1px 1px 0; font-weight: 400; line-height: 20px; white-space: nowrap; overflow: hidden; color: #444; }
.pg th { text-align: center; background: #fff; padding: 0; }
.th-b { background: #7db8f8 !important; color: #fff !important; }
.pg .n { text-align: center; padding: 0; }
.pg .n-on { background: #7db8f8; color: #fff; }
.pg .lk { color: #2f6fe0; }
.pg .m { text-align: center; padding: 0 0 2px; line-height: 18px; }
.pg .cell-on { box-shadow: inset 0 0 0 2px #777; }
.pl { display: inline-block; width: 12px; height: 12px; border: 1px solid #999; border-radius: 2px; margin: 0 6px 0 0; vertical-align: -2px; position: relative; }
.pl::before { content: ""; position: absolute; left: 2px; top: 4px; width: 6px; height: 1px; background: #666; }
.pl::after { content: ""; position: absolute; left: 4.500px; top: 2px; width: 1px; height: 6px; background: #666; }
.pfoot { padding: 3px 0 0 10px; }
.btn { font: inherit; color: #444; background: #fff; border: 1px solid #d2d2d2; border-radius: 3px; padding: 0; }
.btn-p { width: 80px; height: 25px; }
.split { position: absolute; right: 0; top: 376px; width: 4px; height: 100px; background: #555; }

/* canvas */
.canvas { flex: none; width: 1336px; height: 850px; position: relative; background: #000; overflow: hidden; }
.cad { position: absolute; left: 0; top: 0; display: block; }
.d1 { fill: none; stroke: #6a6a6a; stroke-width: 1; }
.d2 { fill: none; stroke: #5f5f5f; stroke-width: 1; }
.d3 { fill: none; stroke: #707070; stroke-width: 1; }
.dimt { fill: none; stroke: #777; stroke-width: 3; stroke-dasharray: 7 48.800; }
.blob { fill: none; stroke: #bdbdbd; stroke-width: 3; }
.blob-v { fill: none; stroke: #c8c8c8; stroke-width: 3; }
.band { fill: none; stroke: #808080; stroke-width: 2; stroke-dasharray: 14 8 2 8 2 8 14 2; }
.white { fill: none; stroke: #b8b8b8; stroke-width: 1.500; }
.greend { fill: none; stroke: #39e639; stroke-width: 1.500; stroke-dasharray: 10 39.800 12 4.500; }
.cy { fill: none; stroke: #00f5f5; stroke-width: 2.600; }
.cy-thin { fill: none; stroke: #00e5e5; stroke-width: 2; }
.cy-t { fill: none; stroke: #00e5e5; stroke-width: 1.300; }
.cy-b { fill: none; stroke: #00e8e8; stroke-width: 3; stroke-dasharray: 2 .7; }
.gr-f { fill: #10c010; }
.thick { fill: none; stroke: #808080; stroke-width: 2.500; }
.comb { fill: none; stroke: #555; stroke-width: 32; stroke-dasharray: 1 54.800; }
.axc circle { fill: none; stroke: #d8d8d8; stroke-width: 1; }
.axt text { font-size: 6px; fill: #d8d8d8; text-anchor: middle; }
.gz-g { stroke: #1dc11d; stroke-width: 2; fill: none; }
.gz-gf { fill: #12c412; }
.gz-r { stroke: #f00; stroke-width: 4; fill: none; }
.gz-rf { fill: #f00; }
.gz-b { fill: #0018b4; }
.gz-ty { font: 13px "Liberation Sans", sans-serif; fill: #10c010; text-anchor: middle; }
.gz-tx { font: 13px "Liberation Sans", sans-serif; fill: #f00; text-anchor: middle; }

.rtool { position: absolute; right: 0; top: 3px; width: 26px; height: 223px; background: #fff; display: flex; flex-direction: column; align-items: flex-start; padding: 10px 0 0 5px; overflow: hidden; border-radius: 2px 0 0 2px; }
.rt { width: 26px; height: 24px; flex: none; margin-bottom: 5px; }
.rt-3d { font: 700 9px "Liberation Sans", sans-serif; fill: #2f80dd; }
.rc { margin: -1px 0 8px 11px; border-top-color: #555; flex: none; }
.rt-line { width: 24px; height: 1px; background: #aaa; flex: none; margin-bottom: 6px; }

.hint { position: absolute; left: 0; right: 0; bottom: 0; height: 27px; background: rgba(52, 52, 52, .82); display: flex; align-items: center; justify-content: center; gap: 5px; color: #fff; padding-left: 8px; }
.hint-ic { width: 12px; height: 18px; }

/* dialog */
.dlg { position: absolute; left: 14px; top: 41px; width: 738px; height: 630px; background: #e3e3e3; border: 1px solid #d0d0d0; display: flex; flex-direction: column; padding: 0 12px; color: #444; }
.dlg-h { height: 29px; flex: none; display: flex; align-items: flex-end; justify-content: space-between; line-height: 22px; }
.dlg-h span { margin-left: -1px; font-size: 13px; }
.dlg-x { width: 11px; height: 11px; stroke: #777; stroke-width: 1; fill: none; margin: 0 -1px 5px 0; }
.dlg-tabs { height: 25px; flex: none; display: flex; align-items: flex-end; gap: 3px; line-height: 20px; }
.dt { width: 36px; height: 21px; line-height: 20px; text-align: center; background: #d9d9d9; color: #666; border-radius: 3px 3px 0 0; }
.dt-w { width: 60px; }
.dt-on { height: 25px; line-height: 22px; background: #fff; color: #2f8ae6; width: 37px; position: relative; z-index: 1; margin-bottom: -1px; }
.dlg-b { width: 712px; height: 563px; flex: none; background: #fff; border: 1px solid #d4d4d4; padding: 9px 8px 0; }
.dlg-btns { display: flex; gap: 6px; height: 26px; }
.btn-d { width: 128px; height: 26px; }
.cwrap { width: 694px; height: 488px; margin-top: 6px; border: 1px solid #cfcfcf; position: relative; overflow: hidden; }
.ct { width: 650px; }
.ct th { height: 17px; padding: 0; font-weight: 400; background: #f0f0f0; line-height: 15px; border: solid #c4c4c4; border-width: 0 1px 1px 0; color: #444; white-space: nowrap; }
.ct td { height: 21px; padding: 0; line-height: 20px; white-space: nowrap; border: solid #d6d6d6; border-width: 0 1px 1px 0; overflow: hidden; color: #444; }
.ind { background: #f0f0f0; }
.ind-on { background: #7db8f8; }
.ct .nm { background: #fffde9; position: relative; }
.ct .u { background: #fffde9; padding-left: 4px; }
.ct .v { background: #fff; padding-left: 3px; }
.ct .v-on { box-shadow: inset 0 0 0 2px #777; }
.l0 { padding-left: 2px !important; }
.l1 { padding-left: 12px !important; }
.h { padding-left: 31px !important; }
.l2 { padding-left: 41px !important; }
.ex { display: inline-block; width: 12px; height: 12px; border: 1px solid #8a8a8a; border-radius: 2px; margin-right: 7px; vertical-align: -2px; position: relative; background: #fff; }
.ex::after { content: ""; position: absolute; left: 2.500px; top: 4px; width: 5px; height: 1px; background: #555; }
.h::before { content: ""; position: absolute; left: 9px; top: 10px; width: 16px; height: 1px; background: #e3e3d6; }
.l2::before { content: ""; position: absolute; left: 18px; top: 0; width: 18px; height: 10px; border: solid #d8d8cc; border-width: 0 0 1px 1px; }
.dot { position: absolute; right: 5px; top: 3px; width: 6px; height: 8px; border-radius: 50%; background: #f00; }
.vbar { position: absolute; left: 681px; top: 14px; width: 8px; height: 201px; border-radius: 4px; background: #d2d2d2; }
.dlg-hint { margin-top: 7px; color: #2a8fe8; line-height: 16px; }
.grip { position: absolute; right: 1px; bottom: 2px; width: 9px; height: 11px; background-image: radial-gradient(#999 1px, transparent 1.200px); background-size: 3.500px 3.500px; }

/* status */
.status { flex: none; height: 28px; display: flex; align-items: center; background: #fafafa; padding-left: 6px; white-space: nowrap; color: #555; }
.st { flex: none; }
.st84 { width: 84px; } .st140 { width: 140px; } .st110 { width: 110px; } .st111 { width: 111px; }
.sb-btns { display: flex; gap: 4px; flex: none; width: 298px; }
.sbtn { flex: none; height: 24px; border: 1px solid #bfbfbf; border-radius: 3px; background: #fff; display: flex; align-items: center; justify-content: center; gap: 3px; }
.sic { width: 18px; height: 18px; flex: none; }
.sw23 { width: 23px; } .sw24 { width: 24px; } .sw25 { width: 25px; } .sw34 { width: 34px; } .sw35 { width: 35px; } .sw36 { width: 36px; }
.sbtn-on { background: #d6e6f8; border-color: #2f80dd; }
.cad-l { width: 113px; flex: none; color: #444; }
.sq { width: 25px; position: relative; }
.minus { width: 11px; height: 11px; border: 1px solid #4f5868; border-radius: 50%; position: relative; display: block; }
.minus::after { content: ""; position: absolute; left: 2px; top: 4px; width: 5px; height: 1px; background: #2f80dd; }
.sq-p .minus::before { content: ""; position: absolute; left: 4px; top: 2px; width: 1px; height: 5px; background: #2f80dd; }
.slider { width: 45px; height: 24px; flex: none; position: relative; display: block; }
.slider::before { content: ""; position: absolute; left: 0; right: 8px; top: 11px; height: 2px; background: #ccc; }
.knob { position: absolute; right: 0; top: 3px; width: 9px; height: 19px; border: 1px solid #777; border-radius: 2px; background: #fff; }

/* ink annotations over the screenshot */
.ink { position: absolute; left: 0; top: 0; pointer-events: none; }
.ink path { fill: none; stroke: #ff1a0a; stroke-width: 3; stroke-linejoin: round; stroke-linecap: round; }
```
